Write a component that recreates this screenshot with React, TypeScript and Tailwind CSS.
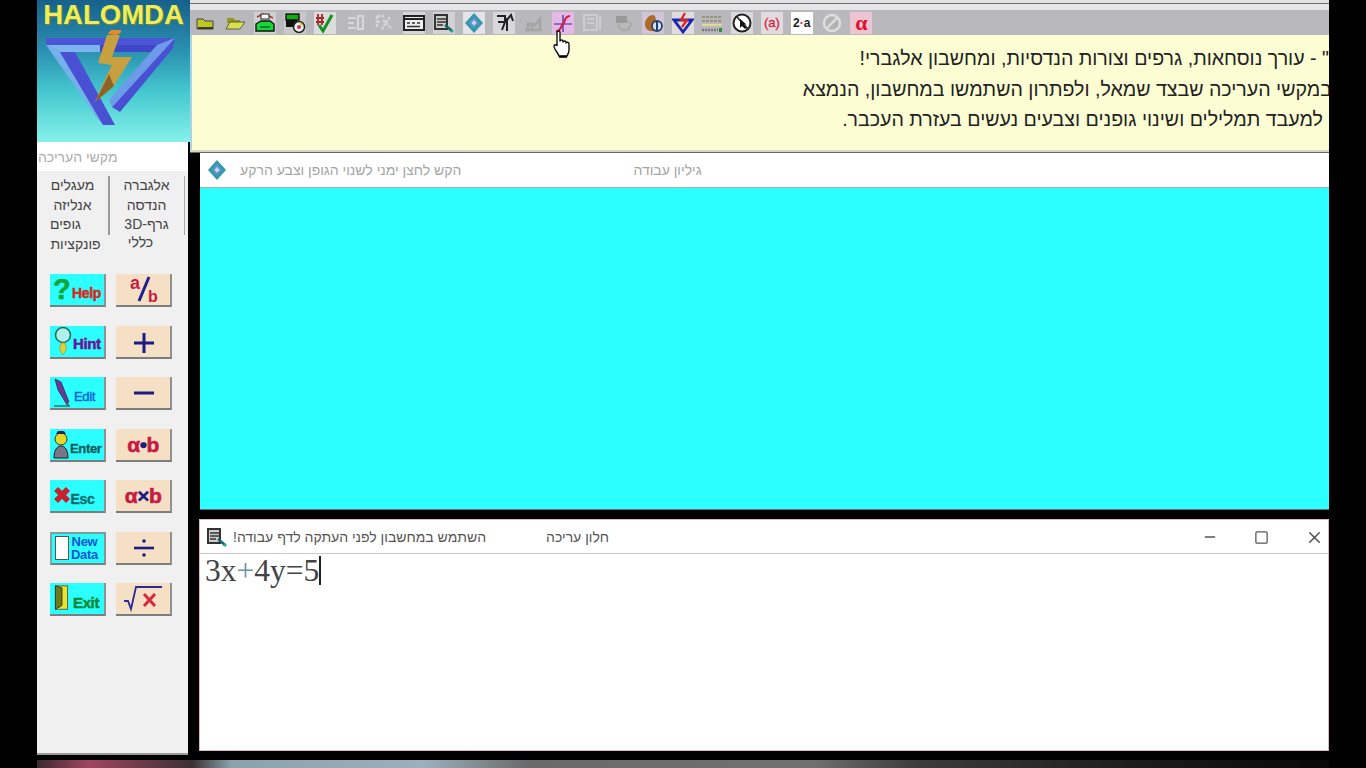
import * as React from 'react';
import { Minus, Square, X } from 'lucide-react';

const sans = 'font-["Liberation_Sans",Arial,sans-serif]';

function Tool({ children, bg = 'bg-transparent' }: { children: React.ReactNode; bg?: string }) {
  return (
    <div className={`flex h-[22px] w-[22px] shrink-0 items-center justify-center ${bg}`}>
      {children}
    </div>
  );
}

function Svg({ children }: { children: React.ReactNode }) {
  return (
    <svg viewBox="0 0 22 22" className="h-[22px] w-[22px]">
      {children}
    </svg>
  );
}

function EditWindowGlyph() {
  return (
    <Svg>
      <rect x="2" y="3" width="12" height="14" fill="#ccc" stroke="#333" strokeWidth="2" />
      <path d="M4 7h9M4 10h9M4 13h6" stroke="#333" strokeWidth="1.6" />
      <path d="M12 13l7 6" stroke="#166" strokeWidth="2.5" />
      <circle cx="19" cy="19" r="1.6" fill="#2a8" />
    </Svg>
  );
}

function DiamondGlyph() {
  return (
    <Svg>
      <path d="M11 1l9 10-9 10-9-10z" fill="#2f9aa8" />
      <path d="M11 5l5 6-5 5-5-5z" fill="#6c8ee0" />
      <path d="M11 8l2.500 3-2.500 2.500-2.500-2.500z" fill="#c8e0f0" />
    </Svg>
  );
}

const toolbar: React.ReactNode[] = [
  <Tool key="1">
    <Svg>
      <path d="M2 7h6l2 2h8v8H2z" fill="#bcc821" stroke="#444" strokeWidth="1" />
      <path d="M3 16h15" stroke="#222" strokeWidth="1.6" />
    </Svg>
  </Tool>,
  <Tool key="2">
    <Svg>
      <path d="M3 6h6l2 2h5v3H3z" fill="#8f9a16" />
      <path d="M2 17l4-7h15l-5 7z" fill="#d8e04a" stroke="#444" strokeWidth="0.8" />
    </Svg>
  </Tool>,
  <Tool key="3" bg="bg-[#d0d0d2]">
    <Svg>
      <path d="M3 5l6-3 5 3M13 3l6 3" stroke="#a33" strokeWidth="1.5" fill="none" />
      <rect x="7" y="2" width="8" height="5" fill="#fff" stroke="#222" />
      <path d="M2 12l5-3h9l4 3v7H2z" fill="#18d838" stroke="#111" strokeWidth="1.4" />
      <path d="M6 15h10" stroke="#063" strokeWidth="1.5" />
    </Svg>
  </Tool>,
  <Tool key="4" bg="bg-[#c8c8ca]">
    <Svg>
      <rect x="2" y="2" width="13" height="6" fill="#1a1" stroke="#111" strokeWidth="1.4" />
      <rect x="2" y="8" width="11" height="7" fill="#111" />
      <circle cx="15" cy="15" r="5.500" fill="#eee" stroke="#222" strokeWidth="1.500" />
      <circle cx="15" cy="15" r="2" fill="#c33" />
      <path d="M16 11l3 2" stroke="#db3" strokeWidth="1.6" />
    </Svg>
  </Tool>,
  <Tool key="5" bg="bg-[#dcdcde]">
    <Svg>
      <path d="M4 2v11M8 2v11M2 6h8M2 10h8" stroke="#a82828" strokeWidth="1.8" />
      <path d="M5 13l4 6 9-16" fill="none" stroke="#129020" strokeWidth="3" />
    </Svg>
  </Tool>,
  <Tool key="6">
    <Svg>
      <path d="M4 6h8M4 11h6M4 16h8M14 4h5v13h-5z" fill="none" stroke="#d8d8d8" strokeWidth="2" />
    </Svg>
  </Tool>,
  <Tool key="7">
    <Svg>
      <path d="M4 4v12M4 4h8M4 10h4M17 5L8 18M10 8l9 9" fill="none" stroke="#d5d5d5" strokeWidth="2.400" strokeDasharray="3 1" />
    </Svg>
  </Tool>,
  <Tool key="8" bg="bg-[#d6d6d8]">
    <Svg>
      <rect x="1" y="4" width="20" height="14" fill="#eee" stroke="#222" strokeWidth="2" />
      <path d="M1 7h20" stroke="#222" strokeWidth="2" />
      <path d="M4 11h3M9 11h3M14 11h3M4 14.500h13" stroke="#333" strokeWidth="1.6" />
    </Svg>
  </Tool>,
  <Tool key="9" bg="bg-[#d2d2d4]">
    <EditWindowGlyph />
  </Tool>,
  <Tool key="10" bg="bg-[#e6e2e8]">
    <DiamondGlyph />
  </Tool>,
  <Tool key="11" bg="bg-[#d8d8da]">
    <Svg>
      <path d="M4 4h8v5M5 10h7l-3 8M13 9l5-6 2 6M14 6v13" fill="none" stroke="#222" strokeWidth="2" />
    </Svg>
  </Tool>,
  <Tool key="12">
    <Svg>
      <path d="M3 18h17M6 17v-5h4v5M12 14l6-7v10" fill="none" stroke="#a4a4a4" strokeWidth="2.600" />
    </Svg>
  </Tool>,
  <Tool key="13" bg="bg-[#e6b8e6]">
    <Svg>
      <path d="M2 12h18M11 3v17" stroke="#2a2a90" strokeWidth="1.2" />
      <path d="M4 19c5 1 5-6 7-7s1-8 7-8" fill="none" stroke="#d81848" strokeWidth="2.200" />
    </Svg>
  </Tool>,
  <Tool key="14">
    <Svg>
      <path d="M2 3h13v15H2zM5 7h7M5 11h7M18 4v14" fill="none" stroke="#d2d2d2" strokeWidth="1.6" />
    </Svg>
  </Tool>,
  <Tool key="15">
    <Svg>
      <path d="M4 4h11v7H4z" fill="#999" />
      <path d="M6 12c0 5 6 8 12 5M15 9l5 3-4 5" fill="none" stroke="#aaa" strokeWidth="2" />
    </Svg>
  </Tool>,
  <Tool key="16" bg="bg-[#d0c4d8]">
    <Svg>
      <path d="M3 12c0-5 4-9 8-9 2 0 3 3 3 7l-2 9c-5 1-9-2-9-7z" fill="#b06a28" />
      <circle cx="15" cy="14" r="5" fill="#dde" stroke="#23456a" strokeWidth="1.800" />
      <path d="M15 9v9" stroke="#1c3c7c" strokeWidth="2" />
    </Svg>
  </Tool>,
  <Tool key="17" bg="bg-[#e0dcde]">
    <Svg>
      <path d="M2 8h18l-9 12z" fill="#e8d8c8" stroke="#1a28b0" strokeWidth="2.800" />
      <path d="M13 1l-4 7h6l-5 7" fill="none" stroke="#d82020" strokeWidth="2.200" />
    </Svg>
  </Tool>,
  <Tool key="18">
    <Svg>
      <path d="M1 5h20M1 9h20" stroke="#8a8a6a" strokeWidth="1.600" strokeDasharray="3 1" />
      <path d="M1 13h20" stroke="#e0d890" strokeWidth="2" />
      <path d="M1 18h16" stroke="#7a7a7a" strokeWidth="2.500" strokeDasharray="2 1" />
      <rect x="18" y="16" width="3" height="4" fill="#3a8a3a" />
    </Svg>
  </Tool>,
  <Tool key="19" bg="bg-[#dadadc]">
    <Svg>
      <circle cx="11" cy="11" r="8.500" fill="#fff" stroke="#222" strokeWidth="2" />
      <path d="M6 5l11 12" stroke="#222" strokeWidth="1.600" />
      <path d="M9 7v9l2-2 3 3 1.500-1.500-3-3h3z" fill="#111" />
    </Svg>
  </Tool>,
  <Tool key="20" bg="bg-[#e2dce0]">
    <span className={`text-[13px] leading-none text-[#d8203c] [-webkit-text-stroke:0.3px_#d8203c] ${sans}`}>(a)</span>
  </Tool>,
  <Tool key="21" bg="bg-white">
    <span className={`text-[12px] font-bold leading-none text-[#222] ${sans}`}>
      2<span className="text-[#d82020]">·</span>a
    </span>
  </Tool>,
  <Tool key="22">
    <Svg>
      <circle cx="11" cy="11" r="8" fill="#b4b4b4" stroke="#dedede" strokeWidth="2.400" />
      <path d="M6 16L16 6" stroke="#dedede" strokeWidth="2.400" />
    </Svg>
  </Tool>,
  <Tool key="23" bg="bg-[#ecc4d2]">
    <span className="font-['Liberation_Serif',serif] text-[22px] font-bold leading-[20px] text-[#e0102c]">α</span>
  </Tool>,
];

function BevelButton({
  children,
  tone,
  pressed = false,
}: {
  children: React.ReactNode;
  tone: string;
  pressed?: boolean;
}) {
  return (
    <div
      className={`flex h-[33px] w-[56px] items-center border-r-2 border-b-2 border-r-[#8f9090] border-b-[#7d7d7d] ${
        pressed ? 'border-t-2 border-l-2 border-t-[#7d9c9c] border-l-[#7da8a8]' : ''
      } ${tone}`}
    >
      {children}
    </div>
  );
}

const cyan = 'bg-[#2cffff]';
const peach = 'justify-center bg-[#f5dfc5]';

function MathGlyph({ children }: { children: React.ReactNode }) {
  return (
    <svg viewBox="0 0 54 31" className="h-[31px] w-[54px]">
      {children}
    </svg>
  );
}

function ButtonLabel({ className, children }: { className: string; children: React.ReactNode }) {
  return <span className={`font-bold leading-none tracking-tight ${sans} ${className}`}>{children}</span>;
}

const buttonRows: [React.ReactNode, React.ReactNode][] = [
  [
    <BevelButton key="help" tone={`${cyan} pl-[3px]`}>
      <ButtonLabel className="text-[29px] text-[#11a53a] [-webkit-text-stroke:0.6px_#11a53a]">?</ButtonLabel>
      <ButtonLabel className="mt-[6px] ml-[2px] text-[14px] text-[#d42a20] [-webkit-text-stroke:0.5px_#d42a20]">Help</ButtonLabel>
    </BevelButton>,
    <BevelButton key="frac" tone={peach}>
      <MathGlyph>
        <text x="14" y="15" fontSize="18" fontWeight="700" fill="#c71a42" fontFamily="Liberation Sans">a</text>
        <path d="M33 3L23 27" stroke="#20208a" strokeWidth="3" />
        <text x="32" y="28" fontSize="16" fontWeight="700" fill="#c71a42" fontFamily="Liberation Sans">b</text>
      </MathGlyph>
    </BevelButton>,
  ],
  [
    <BevelButton key="hint" tone={`${cyan} pl-[3px]`}>
      <svg viewBox="0 0 20 31" className="h-[31px] w-[20px] shrink-0">
        <circle cx="10" cy="9" r="7.500" fill="#aef0ee" stroke="#2a6a5a" strokeWidth="1.600" />
        <path d="M8 17h4l1.500 6-3.500 6-3.500-6z" fill="#e2cf3a" stroke="#99a030" strokeWidth="0.800" />
      </svg>
      <ButtonLabel className="mt-[4px] text-[15px] text-[#6c119c] [-webkit-text-stroke:0.5px_#6c119c]">Hint</ButtonLabel>
    </BevelButton>,
    <BevelButton key="plus" tone={peach}>
      <MathGlyph>
        <path d="M18 17h20M28 7v20" stroke="#1b1b82" strokeWidth="3" />
      </MathGlyph>
    </BevelButton>,
  ],
  [
    <BevelButton key="edit" tone={`${cyan} pl-[2px]`}>
      <svg viewBox="0 0 20 31" className="h-[31px] w-[20px] shrink-0">
        <path d="M3 2l6 3 8 20-3 1L6 13z" fill="#6a3a90" stroke="#2a2a6a" strokeWidth="0.800" />
        <path d="M14 26l3 3" stroke="#555" strokeWidth="2" />
        <path d="M2 29h16" stroke="#3a7a70" strokeWidth="1.600" />
      </svg>
      <ButtonLabel className="mt-[8px] ml-[2px] text-[13px] font-normal text-[#0c5ce0] [-webkit-text-stroke:0.4px_#0c5ce0]">Edit</ButtonLabel>
    </BevelButton>,
    <BevelButton key="minus" tone={peach}>
      <MathGlyph>
        <path d="M18 16h20" stroke="#1b1b82" strokeWidth="3" />
      </MathGlyph>
    </BevelButton>,
  ],
  [
    <BevelButton key="enter" tone={`${cyan} pl-[2px]`}>
      <svg viewBox="0 0 18 31" className="h-[31px] w-[18px] shrink-0">
        <circle cx="9" cy="10" r="6" fill="#e4d828" stroke="#333" />
        <path d="M4 5h10l-2-3H6z" fill="#226" />
        <path d="M2 29c0-8 3-12 7-12s7 4 7 12z" fill="#778" stroke="#222" />
      </svg>
      <ButtonLabel className="mt-[8px] text-[13px] text-[#0a5a5a] [-webkit-text-stroke:0.3px_#0a5a5a]">Enter</ButtonLabel>
    </BevelButton>,
    <BevelButton key="dot" tone={peach}>
      <ButtonLabel className="text-[21px] text-[#c71a42] [-webkit-text-stroke:0.6px_#c71a42]">
        α<span className="text-[#1b1b82] [-webkit-text-stroke:0.4px_#1b1b82]">•</span>b
      </ButtonLabel>
    </BevelButton>,
  ],
  [
    <BevelButton key="esc" tone={`${cyan} pl-[3px]`}>
      <ButtonLabel className="text-[22px] text-[#c8202c]">✖</ButtonLabel>
      <ButtonLabel className="mt-[7px] text-[14px] text-[#0a6a6a] [-webkit-text-stroke:0.3px_#0a6a6a]">Esc</ButtonLabel>
    </BevelButton>,
    <BevelButton key="times" tone={peach}>
      <ButtonLabel className="text-[21px] text-[#c71a42] [-webkit-text-stroke:0.6px_#c71a42]">
        α<span className="text-[#1b1b82] [-webkit-text-stroke:0.4px_#1b1b82]">×</span>b
      </ButtonLabel>
    </BevelButton>,
  ],
  [
    <BevelButton key="new" tone={`${cyan} pl-[3px]`} pressed>
      <div className="h-[24px] w-[14px] shrink-0 border border-[#555] bg-white" />
      <ButtonLabel className="ml-[2px] text-center text-[13px] text-[#0c54d8]">
        New
        <br />
        Data
      </ButtonLabel>
    </BevelButton>,
    <BevelButton key="div" tone={peach}>
      <MathGlyph>
        <path d="M18 16h20" stroke="#1b1b82" strokeWidth="2.600" />
        <circle cx="28" cy="9" r="1.800" fill="#1b1b82" />
        <circle cx="28" cy="23" r="1.800" fill="#1b1b82" />
      </MathGlyph>
    </BevelButton>,
  ],
  [
    <BevelButton key="exit" tone={`${cyan} pl-[3px]`}>
      <svg viewBox="0 0 17 31" className="h-[29px] w-[17px] shrink-0">
        <rect x="2" y="2" width="13" height="25" fill="#e6e62a" stroke="#555" />
        <path d="M2 2l7 2v19l-7 4z" fill="#6c7a18" stroke="#333" />
      </svg>
      <ButtonLabel className="mt-[7px] ml-[3px] text-[15px] text-[#0c8a36] [-webkit-text-stroke:0.5px_#0c8a36]">Exit</ButtonLabel>
    </BevelButton>,
    <BevelButton key="sqrt" tone={peach}>
      <MathGlyph>
        <path d="M8 18h4l3 8 5-22h26" fill="none" stroke="#2a2a98" strokeWidth="1.800" />
        <path d="M28 11l11 12M39 11L28 23" stroke="#d8283c" strokeWidth="3" />
      </MathGlyph>
    </BevelButton>,
  ],
];

function Logo() {
  return (
    <div className="flex h-[142px] w-[153px] flex-col items-center bg-[linear-gradient(180deg,#17608c_0%,#2a8fb0_35%,#45c8cf_65%,#86f2ea_100%)]">
      <div className={`h-[30px] pt-[1px] text-[27.500px] font-bold leading-[28px] text-[#f0ee58] [text-shadow:1px_1px_1px_#8a8a30] ${sans}`}>
        HALOMDA
      </div>
      <svg viewBox="0 30 153 100" className="h-[100px] w-[153px]">
        <path d="M9 38h129l-18 7H9z" fill="#4c54d8" />
        <path d="M9 45h54v7H23z" fill="#7cb4ee" />
        <path d="M63 45h57l-5 7H63z" fill="#3f47c8" />
        <path d="M9 45l14 7 43 73-6-7z" fill="#74b0ec" />
        <path d="M23 52h15l40 73H66z" fill="#4a50d4" />
        <path d="M138 38l-2 10-53 64-8-5z" fill="#4a50d4" />
        <path d="M120 45l18-7-63 69-3-7z" fill="#6e9aea" />
        <path d="M70 35h13l-8 22h20L76 87 58 102l12-27 5-10-14-2z" fill="#c8a040" />
        <path d="M58 102l14-28 5 12z" fill="#8c6428" />
        <path d="M71 34c2-5 9-7 13-4 1 3-2 4-5 5z" fill="#e88a28" />
      </svg>
    </div>
  );
}

function Sidebar() {
  const tabs = [
    ['מעגלים', 'אלגברה', 'pl-[0px]', 'pl-[0px]'],
    ['אנליזה', 'הנדסה', 'pl-[0px]', 'pl-[0px]'],
    ['גופים', 'גרף-3D', 'pr-[14px]', 'pl-[0px]'],
    ['פונקציות', 'כללי', 'pl-[6px]', 'pr-[12px] -mt-[2px]'],
  ];
  return (
    <div dir="ltr" className={`h-[613px] w-[151px] border-b-2 border-[#999] bg-[#f0f0f0] ${sans}`}>
      <div className="flex h-[29px] items-end bg-white pb-[7px] pl-[1px]">
        <span dir="rtl" className="text-[14px] leading-none text-[#adadad]">
          מקשי העריכה
        </span>
      </div>
      <div className="mt-[5px] flex flex-col">
        {tabs.map(([left, right, leftPad, rightPad], i) => (
          <div key={left} className="flex h-[19.500px] w-[148px] text-[14px] leading-[19px] text-[#444]">
            <div className={`w-[71px] text-center ${leftPad}`} dir="rtl">
              {left}
            </div>
            <div className={`w-[1.500px] ${i < 3 ? 'bg-[#9a9a9a]' : ''}`} />
            <div className={`w-[74px] text-center ${rightPad}`} dir="rtl">
              {right}
            </div>
            <div className={`w-[1.500px] ${i < 3 ? 'bg-[#a8a8a8]' : ''}`} />
          </div>
        ))}
      </div>
      <div className="mt-[20px] flex flex-col gap-[18.500px] pl-[13px]">
        {buttonRows.map(([left, right], i) => (
          <div key={i} className="flex gap-[10px]">
            {left}
            {right}
          </div>
        ))}
      </div>
    </div>
  );
}

function Banner() {
  return (
    <div
      dir="rtl"
      className={`h-[115px] overflow-hidden border-l-2 border-[#a9d3e6] bg-[#fdfdd3] pt-[8px] text-[19.600px] leading-[30.500px] whitespace-nowrap text-[#222] ${sans}`}
    >
      <div>" - עורך נוסחאות, גרפים וצורות הנדסיות, ומחשבון אלגברי!</div>
      <div className="mr-[-3px]">במקשי העריכה שבצד שמאל, ולפתרון השתמשו במחשבון, הנמצא</div>
      <div className="mr-[6px]">למעבד תמלילים ושינוי גופנים וצבעים נעשים בעזרת העכבר.</div>
    </div>
  );
}

function Worksheet() {
  return (
    <div className={`ml-[10px] ${sans}`}>
      <div className="flex h-[35px] items-center border-b border-[#aaa] bg-white pl-[6px] text-[14px] text-[#a5a5a5]">
        <div className="h-[22px] w-[22px]">
          <DiamondGlyph />
        </div>
        <span dir="rtl" className="ml-[12px]">
          הקש לחצן ימני לשנוי הגופן וצבע הרקע
        </span>
        <span dir="rtl" className="ml-[172px]">
          גיליון עבודה
        </span>
      </div>
      <div className="h-[322px] border-b border-[#667] bg-[#2cffff]" />
    </div>
  );
}

function EditWindow() {
  return (
    <div className={`mt-[9px] ml-[9px] h-[232px] border border-[#e3b4bc] bg-white ${sans}`}>
      <div className="flex h-[34px] items-center border-b border-[#c8c8c8] pt-[1px] pl-[6px] text-[14px] text-[#555]">
        <div className="h-[22px] w-[22px]">
          <EditWindowGlyph />
        </div>
        <span dir="rtl" className="ml-[5px]">
          השתמש במחשבון לפני העתקה לדף עבודה!
        </span>
        <span dir="rtl" className="ml-[60px]">
          חלון עריכה
        </span>
        <div className="ml-auto flex items-center gap-[36px] pr-[4px] text-[#555]">
          <Minus size={16} strokeWidth={2} />
          <Square size={15} strokeWidth={2} />
          <X size={19} strokeWidth={2} />
        </div>
      </div>
      <div className="flex h-[33px] items-center pl-[5px] font-['Liberation_Serif',serif] text-[31.500px] leading-none text-[#444]">
        3x<span className="text-[#6f8fa8]">+</span>4y=5
        <div className="h-[29px] w-[2px] bg-[#222]" />
      </div>
    </div>
  );
}

function HandCursor() {
  return (
    <svg viewBox="0 0 18 28" className="absolute top-[30px] left-[553px] h-[28px] w-[18px]">
      <path
        d="M4 2.500c0-2 3-2 3 0v9c0-2 3-2 3 0v1c0-2 3-2 3 0v1c0-2 3-1.500 3 .5v6c0 2.500-1 4-2 6H6c-1-3-4.500-6.500-5-9.500 0-2 2-2.500 3-.5z"
        fill="#fff"
        stroke="#111"
        strokeWidth="1.400"
      />
      <path d="M6 26.800h8" stroke="#000" strokeWidth="2" />
    </svg>
  );
}

export default function App() {
  return (
    <div className="relative h-[768px] w-[1366px] overflow-hidden bg-black">
      <div className="flex h-[760px] pl-[37px]">
        <div className="w-[153px] shrink-0">
          <Logo />
          <Sidebar />
        </div>
        <div className="w-[1139px] shrink-0">
          <div className="h-[3px] bg-[#e2e2e2]" />
          <div className="h-px bg-[#707074]" />
          <div className="h-[6px] bg-[#e6e6e8]" />
          <div className="flex h-[25px] items-center gap-[7.820px] bg-[#b9b9bd] pl-[4.500px]">{toolbar}</div>
          <Banner />
          <div className="h-[2px] bg-[#d6d6c6]" />
          <div className="h-px bg-[#666]" />
          <Worksheet />
          <EditWindow />
        </div>
      </div>
      <div className="ml-[37px] h-[8px] w-[1292px] bg-[linear-gradient(90deg,#3a2a30_0%,#a04560_4%,#3a3034_12%,#8aa2ac_15%,#9ab0bc_30%,#6a6a6a_38%,#707070_60%,#3c3c3c_68%,#1c1c1c_85%,#080808_100%)]" />
      <HandCursor />
    </div>
  );
}
